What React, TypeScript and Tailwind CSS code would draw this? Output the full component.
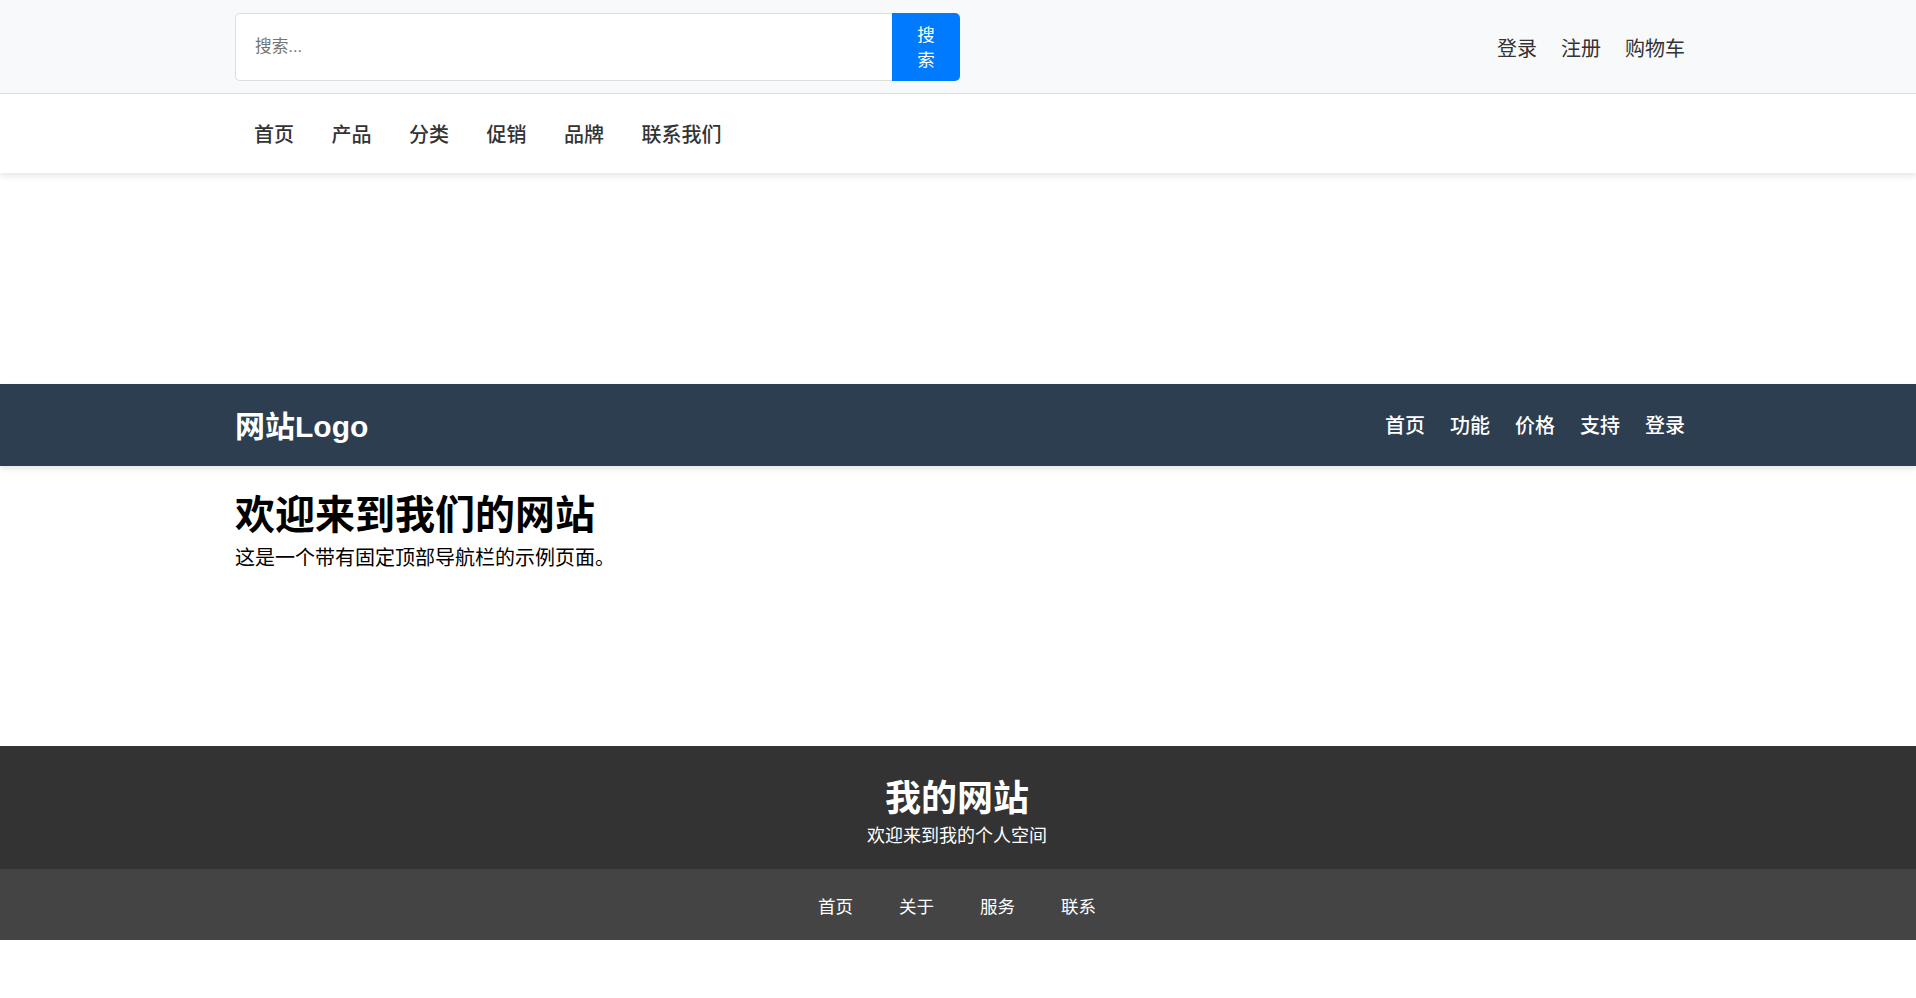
import React from 'react';

const shopLinks = ['首页', '产品', '分类', '促销', '品牌', '联系我们'];
const accountLinks = ['登录', '注册', '购物车'];
const headerLinks = ['首页', '功能', '价格', '支持', '登录'];
const footerLinks = ['首页', '关于', '服务', '联系'];

const App: React.FC = () => {
  return (
    <div className="min-h-[998px] bg-white text-black font-['Liberation_Sans','Noto_Sans_CJK_SC',sans-serif]">
      {/* Shop top bar */}
      <div className="h-[94px] border-b border-[#dee2e6] bg-[#f8f9fa] pl-[235px] pr-[231px] flex items-center justify-between">
        <form className="flex w-[725px] h-[68px] mt-[1px]">
          <input
            type="text"
            placeholder="搜索..."
            className="flex-1 min-w-0 rounded-l-[5px] border border-r-0 border-[#dddddd] bg-white px-[19px] text-[16.67px] placeholder-[#757575] outline-none"
          />
          <button
            type="button"
            className="w-[68px] shrink-0 rounded-r-[5px] bg-[#007bff] px-[20px] pt-[2px] text-[17.5px] leading-[25px] text-white"
          >
            搜索
          </button>
        </form>
        <div className="flex items-center gap-[24px] mt-[4px] text-[20px] leading-[30px] text-[#333333]">
          {accountLinks.map((link) => (
            <a key={link} href="#">{link}</a>
          ))}
        </div>
      </div>

      {/* Shop nav */}
      <nav className="h-[79px] bg-white pl-[254px] pt-[2px] flex items-center gap-[37.5px] text-[20px] font-medium text-[#333333] shadow-[0_2.5px_6px_rgba(0,0,0,0.1)]">
        {shopLinks.map((link) => (
          <a key={link} href="#">{link}</a>
        ))}
      </nav>

      {/* Fixed header */}
      <header className="mt-[211px] h-[82px] bg-[#2c3e50] pl-[235px] pr-[231px] flex items-center justify-between text-white shadow-[0_2.5px_6px_rgba(0,0,0,0.1)]">
        <div className="text-[30px] leading-[45px] font-bold mt-[3px]">网站Logo</div>
        <div className="flex items-center gap-[25px] pt-[2px] text-[20px] font-medium">
          {headerLinks.map((link) => (
            <a key={link} href="#">{link}</a>
          ))}
        </div>
      </header>

      <main className="h-[280px] pl-[235px] pt-[22px]">
        <h1 className="text-[40px] leading-[54px] font-bold">欢迎来到我们的网站</h1>
        <p className="text-[20px] leading-[30px] mt-[1px]">这是一个带有固定顶部导航栏的示例页面。</p>
      </main>

      {/* Footer */}
      <footer className="text-white text-center">
        <div className="h-[123px] bg-[#333333] flex flex-col items-center pt-[31px] pr-[2px]">
          <h2 className="text-[36px] leading-[44px] font-bold">我的网站</h2>
          <p className="text-[18px] leading-[27px] mt-[2px]">欢迎来到我的个人空间</p>
        </div>
        <div className="h-[71px] bg-[#444444] flex items-center justify-center gap-[46px] pt-[5px] pr-[2px] text-[17.5px]">
          {footerLinks.map((link) => (
            <a key={link} href="#">{link}</a>
          ))}
        </div>
      </footer>
    </div>
  );
};

export default App;
